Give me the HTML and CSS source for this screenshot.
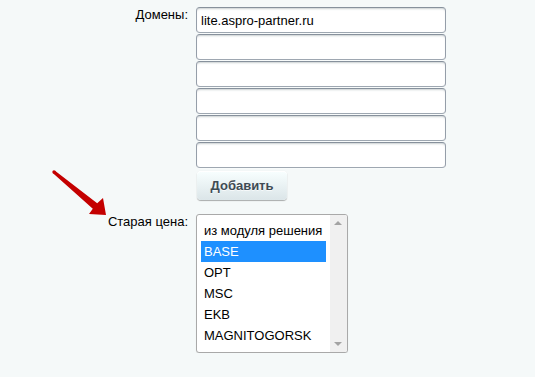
FILE: index.html
```html
<!DOCTYPE html>
<html lang="ru">
<head>
    <meta charset="UTF-8">
    <meta name="viewport" content="width=device-width, initial-scale=1.0">
    <title>Настройки</title>
    <link rel="stylesheet" href="styles.css">
</head>
<body>
    <div class="settings">
        <div class="form-row">
            <label class="form-label">Домены:</label>
            <div class="form-field">
                <input type="text" class="adm-input" value="lite.aspro-partner.ru">
                <input type="text" class="adm-input">
                <input type="text" class="adm-input">
                <input type="text" class="adm-input">
                <input type="text" class="adm-input">
                <input type="text" class="adm-input">
                <button type="button" class="adm-btn">Добавить</button>
            </div>
        </div>

        <div class="form-row price-row">
            <label class="form-label">Старая цена:</label>
            <div class="form-field">
                <div class="listbox">
                    <div class="listbox-items">
                        <div class="listbox-item">из модуля решения</div>
                        <div class="listbox-item selected">BASE</div>
                        <div class="listbox-item">OPT</div>
                        <div class="listbox-item">MSC</div>
                        <div class="listbox-item">EKB</div>
                        <div class="listbox-item">MAGNITOGORSK</div>
                    </div>
                    <div class="listbox-scroll">
                        <span class="scroll-up"></span>
                        <span class="scroll-down"></span>
                    </div>
                </div>
            </div>
        </div>

        <svg class="hint-arrow" width="80" height="70" viewBox="0 0 80 70">
            <circle cx="14" cy="12" r="1.7" fill="#c40000"/>
            <polygon points="13,13.2 52.8,48.7 49,54 66,55 63,38 57.2,43.3 15,10.8" fill="#c40000"/>
        </svg>
    </div>
</body>
</html>
```

FILE: styles.css
```css
* {
    margin: 0;
    padding: 0;
    box-sizing: border-box;
}

body {
    background: #f5f9f9;
    font-family: "Liberation Sans", Arial, sans-serif;
    font-size: 13px;
    color: #000;
}

.settings {
    position: relative;
    padding-top: 7px;
}

.form-row {
    display: grid;
    grid-template-columns: 196px 260px;
}

.price-row {
    margin-top: 14px;
}

.form-label {
    text-align: right;
    padding-right: 8px;
    line-height: 15px;
}

.form-field {
    display: flex;
    flex-direction: column;
    align-items: flex-start;
}

.adm-input {
    width: 250px;
    height: 26px;
    margin-bottom: 1px;
    padding: 0 4px;
    font-family: inherit;
    font-size: 13px;
    color: #000;
    background: #fff;
    border: 1px solid;
    border-color: #87919c #959ea9 #9ea7b1 #959ea9;
    border-radius: 4px;
    box-shadow: 0 1px 0 0 rgba(255,255,255,0.3), inset 0 2px 2px -1px rgba(180,188,191,0.7);
    outline: none;
}

.adm-btn {
    margin: 2px 0 0 1px;
    width: 90px;
    height: 29px;
    font-family: inherit;
    font-size: 13px;
    font-weight: bold;
    color: #3f4b54;
    text-shadow: 0 1px rgba(255,255,255,0.7);
    background: linear-gradient(to bottom, #f8ffff, #dbe5e8);
    border: none;
    border-radius: 4px;
    box-shadow: 0 0 1px rgba(0,0,0,0.11), 0 1px 1px rgba(0,0,0,0.3), inset 0 1px #fff, inset 0 0 1px rgba(255,255,255,0.5);
    cursor: pointer;
}

.listbox {
    display: flex;
    width: 152px;
    height: 139px;
    background: #fff;
    border: 1px solid #a9a9a9;
    border-radius: 3px;
    box-shadow: 0 1px 1px rgba(0,0,0,0.08);
    overflow: hidden;
}

.listbox-items {
    flex: 1;
    padding: 5px 4px 4px;
}

.listbox-item {
    height: 21px;
    line-height: 21px;
    padding-left: 3px;
    white-space: nowrap;
}

.listbox-item.selected {
    background: #1e90ff;
    color: #fff;
}

.listbox-scroll {
    position: relative;
    width: 17px;
    background: #f0f0f0;
}

.scroll-up,
.scroll-down {
    position: absolute;
    left: 4px;
    width: 0;
    height: 0;
    border-left: 4px solid transparent;
    border-right: 4px solid transparent;
}

.scroll-up {
    top: 6px;
    border-bottom: 4px solid #a3a3a3;
}

.scroll-down {
    bottom: 6px;
    border-top: 4px solid #a3a3a3;
}

.hint-arrow {
    position: absolute;
    left: 40px;
    top: 160px;
}
```
